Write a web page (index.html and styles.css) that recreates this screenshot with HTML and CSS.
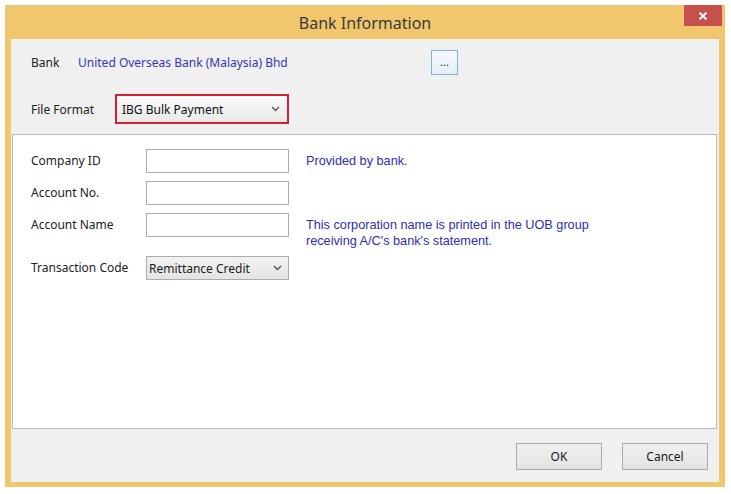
FILE: index.html
```html
<!DOCTYPE html>
<html>
<head>
<meta charset="utf-8">
<link rel="stylesheet" href="styles.css">
</head>
<body>
<div class="window">
  <div class="titlebar">
    <span></span>
    <span class="title">Bank Information</span>
    <button class="close" type="button">
      <svg width="10" height="10" viewBox="0 0 10 10"><path d="M1.5 1.5 L8.5 8.5 M8.5 1.5 L1.5 8.5" stroke="#fff" stroke-width="1.8" fill="none"/></svg>
    </button>
  </div>
  <div class="client">
    <div class="top">
      <div class="bank-row">
        <span class="lbl bank-lbl">Bank</span>
        <span class="bank-val">United Overseas Bank (Malaysia) Bhd</span>
        <button class="dots" type="button">...</button>
      </div>
      <div class="format-row">
        <span class="lbl format-lbl">File Format</span>
        <div class="format-select">
          <span>IBG Bulk Payment</span>
          <svg class="chev" width="9" height="6" viewBox="0 0 9 6"><path d="M1 1 L4.5 4.5 L8 1" stroke="#555" stroke-width="1.4" fill="none"/></svg>
        </div>
      </div>
    </div>
    <div class="panel">
      <div class="form">
        <span class="lbl">Company ID</span>
        <div class="input"></div>
        <span class="hint">Provided by bank.</span>

        <span class="lbl">Account No.</span>
        <div class="input"></div>
        <span class="hint"></span>

        <span class="lbl">Account Name</span>
        <div class="input"></div>
        <span class="hint">This corporation name is printed in the UOB group<br>receiving A/C's bank's statement.</span>

        <span class="lbl tc-lbl">Transaction Code</span>
        <div class="combo">
          <span>Remittance Credit</span>
          <svg class="chev" width="9" height="6" viewBox="0 0 9 6"><path d="M1 1 L4.5 4.5 L8 1" stroke="#555" stroke-width="1.4" fill="none"/></svg>
        </div>
        <span class="hint"></span>
      </div>
    </div>
    <div class="footer">
      <button class="btn" type="button">OK</button>
      <button class="btn" type="button">Cancel</button>
    </div>
  </div>
</div>
</body>
</html>
```
FILE: styles.css
```css
html, body {
  margin: 0;
  padding: 0;
  background: #ffffff;
}
body {
  font-family: "Noto Sans", "DejaVu Sans", sans-serif;
  font-size: 12px;
  color: #1a1a1a;
}
.window {
  margin: 5px 0 0 5px;
  width: 720px;
  height: 482px;
  background: #f0c76c;
  display: flex;
  flex-direction: column;
}
.titlebar {
  height: 34px;
  display: grid;
  grid-template-columns: 1fr auto 1fr;
  align-items: center;
}
.title {
  font-size: 16px;
  color: #3a3a3a;
  padding-top: 1px;
}
.close {
  justify-self: end;
  align-self: start;
  margin-right: 3px;
  width: 38px;
  height: 21px;
  border: none;
  padding: 0;
  background: #c7504f;
  display: flex;
  align-items: center;
  justify-content: center;
}
.client {
  flex: 1;
  margin: 0 6px 5px 6px;
  background: #f0f0f0;
  display: flex;
  flex-direction: column;
  border-top: 1px solid #f6f3ea;
}
.top {
  height: 94px;
  display: flex;
  flex-direction: column;
  padding-top: 10px;
  box-sizing: border-box;
}
.lbl {
  color: #222222;
}
.bank-row {
  height: 25px;
  display: flex;
  align-items: center;
  padding-left: 20px;
}
.bank-lbl {
  width: 47px;
}
.bank-val {
  color: #3535b5;
  width: 353px;
}
.dots {
  width: 27px;
  height: 25px;
  padding: 0 0 2px 0;
  border: 1px solid #7eb4ea;
  background: linear-gradient(#f5f9fd, #e6eef7);
  font-family: "Noto Sans", sans-serif;
  font-size: 11px;
  color: #333;
  box-sizing: border-box;
}
.format-row {
  margin-top: 19px;
  height: 30px;
  display: flex;
  align-items: center;
  padding-left: 20px;
}
.format-lbl {
  width: 84px;
}
.format-select {
  width: 174px;
  height: 30px;
  box-sizing: border-box;
  border: 2px solid #d2202e;
  background: linear-gradient(#fbfbfb, #e9e9e9);
  display: flex;
  align-items: center;
  justify-content: space-between;
  padding: 0 7px 0 5px;
  color: #111;
}
.panel {
  height: 295px;
  margin: 0 2px 0 1px;
  box-sizing: border-box;
  border: 1px solid #b9b9b9;
  background: #ffffff;
  padding: 14px 0 0 18px;
}
.form {
  display: grid;
  grid-template-columns: 115px 143px auto;
  grid-template-rows: 24px 24px 24px 24px;
  row-gap: 8px;
  column-gap: 0;
  align-items: start;
}
.form .lbl {
  line-height: 24px;
}
.form .tc-lbl {
  grid-row: 4;
}
.form > .combo {
  margin-top: 11px;
}
.form > .lbl.tc-lbl {
  margin-top: 11px;
}
.input {
  height: 24px;
  box-sizing: border-box;
  border: 1px solid #acacac;
  background: #fff;
}
.hint {
  font-family: "Liberation Sans", Arial, sans-serif;
  font-size: 12.7px;
  color: #2e2eb5;
  padding-left: 17px;
  line-height: 16px;
  padding-top: 4px;
}
.combo {
  height: 24px;
  box-sizing: border-box;
  border: 1px solid #acacac;
  background: linear-gradient(#f2f2f2, #e4e4e4);
  display: flex;
  align-items: center;
  justify-content: space-between;
  padding: 0 6px 0 2px;
}
.footer {
  flex: 1;
  display: flex;
  justify-content: flex-end;
  align-items: flex-start;
  gap: 20px;
  padding: 14px 11px 0 0;
}
.btn {
  width: 86px;
  height: 27px;
  border: 1px solid #acacac;
  background: linear-gradient(#f0f0f0, #e3e3e3);
  font-family: "Noto Sans", sans-serif;
  font-size: 12px;
  color: #1a1a1a;
  padding: 0;
}
```
